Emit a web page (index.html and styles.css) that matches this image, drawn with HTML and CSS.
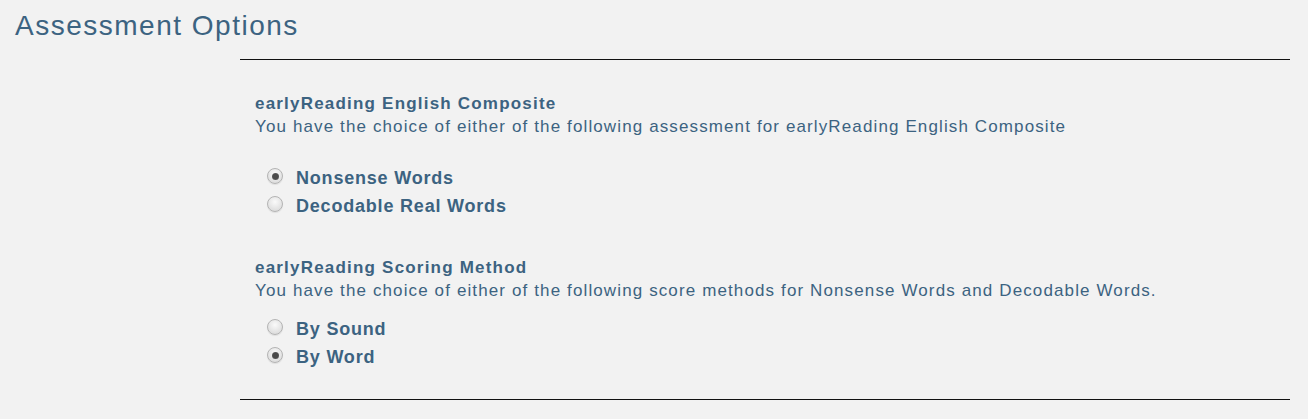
FILE: index.html
```html
<!DOCTYPE html>
<html>
<head>
<meta charset="utf-8">
<link rel="stylesheet" href="styles.css">
</head>
<body>
<h1 class="page-title">Assessment Options</h1>
<div class="options">
  <section class="group group-first">
    <h2 class="group-title">earlyReading English Composite</h2>
    <p class="group-desc">You have the choice of either of the following assessment for earlyReading English Composite</p>
    <ul class="choices">
      <li class="choice"><span class="radio checked"></span><span class="choice-label">Nonsense Words</span></li>
      <li class="choice"><span class="radio"></span><span class="choice-label">Decodable Real Words</span></li>
    </ul>
  </section>
  <section class="group group-second">
    <h2 class="group-title">earlyReading Scoring Method</h2>
    <p class="group-desc">You have the choice of either of the following score methods for Nonsense Words and Decodable Words.</p>
    <ul class="choices">
      <li class="choice"><span class="radio"></span><span class="choice-label">By Sound</span></li>
      <li class="choice"><span class="radio checked"></span><span class="choice-label">By Word</span></li>
    </ul>
  </section>
</div>
</body>
</html>
```
FILE: styles.css
```css
html, body {
  margin: 0;
  padding: 0;
  background: #f2f2f2;
}
body {
  font-family: "Liberation Sans", Arial, sans-serif;
  color: #3c6381;
}
.page-title {
  margin: 0;
  padding: 9px 0 0 15px;
  font-size: 28px;
  font-weight: normal;
  line-height: 34px;
  letter-spacing: 1.5px;
}
.options {
  margin: 16px 18px 0 240px;
  border-top: 1px solid #111;
  border-bottom: 1px solid #111;
  padding: 33px 0 28px 15px;
}
.group-title {
  margin: 0;
  font-size: 17px;
  font-weight: bold;
  line-height: 22px;
  letter-spacing: 1.2px;
}
.group-desc {
  margin: 0;
  font-size: 17px;
  line-height: 24px;
  letter-spacing: 1.12px;
}
.choices {
  list-style: none;
  margin: 0;
  padding: 0 0 0 12px;
}
.group-first .choices {
  margin-top: 25px;
}
.group-second {
  margin-top: 37px;
}
.group-second .choices {
  margin-top: 12px;
}
.choice {
  display: flex;
  align-items: center;
  height: 28px;
}
.radio {
  width: 16px;
  height: 16px;
  flex: none;
  border-radius: 50%;
  border: 1px solid #b4b4b4;
  background: radial-gradient(circle at 50% 35%, #fafafa, #dedede 75%);
  box-shadow: 0 1px 1px rgba(0, 0, 0, 0.08);
  box-sizing: border-box;
  position: relative;
  margin-right: 13px;
  margin-top: -4px;
}
.radio.checked::after {
  content: "";
  position: absolute;
  left: 3.5px;
  top: 3.5px;
  width: 7px;
  height: 7px;
  border-radius: 50%;
  background: radial-gradient(circle, #4a4a4a 45%, #6a6a6a 100%);
}
.choice-label {
  font-size: 18px;
  font-weight: bold;
  letter-spacing: 0.8px;
}
```
